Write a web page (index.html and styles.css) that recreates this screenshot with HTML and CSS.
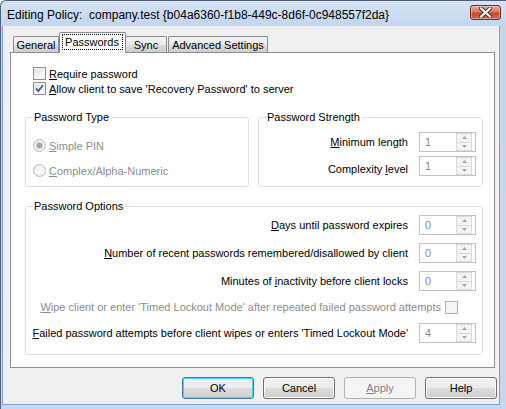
FILE: index.html
```html
<!DOCTYPE html>
<html>
<head>
<meta charset="utf-8">
<link rel="stylesheet" href="styles.css">
</head>
<body>
<div class="window">
  <div class="titlebar">
    <span class="title">Editing Policy:&nbsp; company.test {b04a6360-f1b8-449c-8d6f-0c948557f2da}</span>
    <span class="close">
      <svg width="13" height="11" viewBox="0 0 13 11"><path d="M2 1.5 L11 9.5 M11 1.5 L2 9.5" stroke="#4a2a24" stroke-width="4" stroke-linecap="square"/><path d="M2 1.5 L11 9.5 M11 1.5 L2 9.5" stroke="#fff" stroke-width="2.2" stroke-linecap="square"/></svg>
    </span>
  </div>
  <div class="client">
    <div class="tabs">
      <div class="tab t-general">General</div>
      <div class="tab t-pass active"><span class="focus">Passwords</span></div>
      <div class="tab t-sync">Sync</div>
      <div class="tab t-adv">Advanced Settings</div>
    </div>
    <div class="panel">
      <div class="check">
        <span class="box"></span><span><u>R</u>equire password</span>
      </div>
      <div class="check">
        <span class="box"><svg width="11" height="11" viewBox="0 0 11 11"><path d="M2 5.5 L4.3 8 L9 2.2" fill="none" stroke="#3b5aa0" stroke-width="1.8"/></svg></span><span><u>A</u>llow client to save 'Recovery Password' to server</span>
      </div>
      <div class="pair">
        <fieldset class="group type">
          <legend>Password Type</legend>
          <div class="radio-row"><span class="radio on"></span><span class="dis"><u>S</u>imple PIN</span></div>
          <div class="radio-row"><span class="radio"></span><span class="dis"><u>C</u>omplex/Alpha-Numeric</span></div>
        </fieldset>
        <fieldset class="group strength">
          <legend>Password Strength</legend>
          <div class="row"><span class="lbl"><u>M</u>inimum length</span><span class="spin"><span class="val">1</span><span class="arrows"><span class="ab"><svg width="5" height="3" viewBox="0 0 5 3"><path d="M0 3 L2.5 0 L5 3Z" fill="#a9a9a9"/></svg></span><span class="ab"><svg width="5" height="3" viewBox="0 0 5 3"><path d="M0 0 L2.5 3 L5 0Z" fill="#a9a9a9"/></svg></span></span></span></div>
          <div class="row low"><span class="lbl">Complexity <u>l</u>evel</span><span class="spin"><span class="val">1</span><span class="arrows"><span class="ab"><svg width="5" height="3" viewBox="0 0 5 3"><path d="M0 3 L2.5 0 L5 3Z" fill="#a9a9a9"/></svg></span><span class="ab"><svg width="5" height="3" viewBox="0 0 5 3"><path d="M0 0 L2.5 3 L5 0Z" fill="#a9a9a9"/></svg></span></span></span></div>
        </fieldset>
      </div>
      <fieldset class="group options">
        <legend>Password Options</legend>
        <div class="row"><span class="lbl"><u>D</u>ays until password expires</span><span class="spin"><span class="val">0</span><span class="arrows"><span class="ab"><svg width="5" height="3" viewBox="0 0 5 3"><path d="M0 3 L2.5 0 L5 3Z" fill="#a9a9a9"/></svg></span><span class="ab"><svg width="5" height="3" viewBox="0 0 5 3"><path d="M0 0 L2.5 3 L5 0Z" fill="#a9a9a9"/></svg></span></span></span></div>
        <div class="row"><span class="lbl"><u>N</u>umber of recent passwords remembered/disallowed by client</span><span class="spin"><span class="val">0</span><span class="arrows"><span class="ab"><svg width="5" height="3" viewBox="0 0 5 3"><path d="M0 3 L2.5 0 L5 3Z" fill="#a9a9a9"/></svg></span><span class="ab"><svg width="5" height="3" viewBox="0 0 5 3"><path d="M0 0 L2.5 3 L5 0Z" fill="#a9a9a9"/></svg></span></span></span></div>
        <div class="row"><span class="lbl">Minutes of <u>i</u>nactivity before client locks</span><span class="spin"><span class="val">0</span><span class="arrows"><span class="ab"><svg width="5" height="3" viewBox="0 0 5 3"><path d="M0 3 L2.5 0 L5 3Z" fill="#a9a9a9"/></svg></span><span class="ab"><svg width="5" height="3" viewBox="0 0 5 3"><path d="M0 0 L2.5 3 L5 0Z" fill="#a9a9a9"/></svg></span></span></span></div>
        <div class="row wipe"><span class="lbl dis"><u>W</u>ipe client or enter 'Timed Lockout Mode' after repeated failed password attempts</span><span class="box disabled"></span></div>
        <div class="row"><span class="lbl"><u>F</u>ailed password attempts before client wipes or enters 'Timed Lockout Mode'</span><span class="spin"><span class="val">4</span><span class="arrows"><span class="ab"><svg width="5" height="3" viewBox="0 0 5 3"><path d="M0 3 L2.5 0 L5 3Z" fill="#a9a9a9"/></svg></span><span class="ab"><svg width="5" height="3" viewBox="0 0 5 3"><path d="M0 0 L2.5 3 L5 0Z" fill="#a9a9a9"/></svg></span></span></span></div>
      </fieldset>
    </div>
    <div class="buttons">
      <span class="btn default">OK</span>
      <span class="btn">Cancel</span>
      <span class="btn disabled"><u>A</u>pply</span>
      <span class="btn">Help</span>
    </div>
  </div>
</div>
</body>
</html>
```
FILE: styles.css
```css
html, body {
  margin: 0;
  padding: 0;
  background: #fff;
}
body {
  font-family: "Liberation Sans", Arial, sans-serif;
  font-size: 11px;
  color: #000;
}
u { text-decoration: underline; text-underline-offset: 1px; }

.window {
  width: 506px;
  height: 409px;
  box-sizing: border-box;
  border-top: 1px solid #4f6178;
  border-left: 1px solid #4f6178;
  border-top-left-radius: 6px;
  background: linear-gradient(to bottom, #d6e4f5 0, #c1d5ed 26px, #c5d8ef 100%);
  display: flex;
  flex-direction: column;
  overflow: hidden;
}
.titlebar {
  height: 25px;
  flex: none;
  display: flex;
  align-items: center;
  padding: 0 5px 0 6px;
}
.title {
  font-size: 12px;
  color: #000;
  padding-top: 3px;
}
.close {
  margin-left: auto;
  align-self: flex-start;
  margin-top: 4px;
  width: 31px;
  height: 15px;
  box-sizing: border-box;
  border: 1px solid #6e2a1e;
  border-radius: 3px;
  background: linear-gradient(to bottom, #e8a594 0, #d97a63 45%, #c24a2f 55%, #d4694e 100%);
  box-shadow: inset 0 0 0 1px rgba(255,255,255,0.35);
  display: flex;
  align-items: center;
  justify-content: center;
}

.client {
  flex: 1;
  margin: 0 6px 4px 1px;
  background: #f0f0f0;
  border: 1px solid #7fa0c8;
  border-top: none;
  display: flex;
  flex-direction: column;
}

.tabs {
  display: flex;
  align-items: flex-end;
  height: 20px;
  padding: 6px 0 0 10px;
}
.tab {
  height: 16px;
  box-sizing: border-box;
  border: 1px solid #898c95;
  border-bottom: none;
  border-radius: 2px 2px 0 0;
  background: linear-gradient(to bottom, #f3f3f3 0, #ebebeb 50%, #dddddd 51%, #cfcfcf 100%);
  display: flex;
  align-items: center;
  justify-content: center;
  padding-top: 1px;
}
.t-general { width: 46px; }
.t-pass { width: 67px; }
.t-sync { width: 42px; margin-left: -1px; }
.t-adv { width: 100px; margin-left: 1px; }
.tab.active {
  height: 21px;
  margin-bottom: -1px;
  background: #fff;
  position: relative;
  z-index: 1;
  align-items: flex-start;
  padding-top: 2px;
}
.focus {
  outline: 1px dotted #000;
  outline-offset: 0;
  padding: 1px 3px 1px 2px;
  line-height: 12px;
}

.panel {
  margin: 0 4px 0 7px;
  border: 1px solid #898c95;
  background: #fff;
  padding: 13px 11px 12px 14px;
}

.check {
  display: flex;
  align-items: center;
  height: 15px;
  padding-left: 8px;
}
.box {
  width: 13px;
  height: 13px;
  box-sizing: border-box;
  border: 1px solid #8e8f8f;
  background: linear-gradient(135deg, #dcdcdc 0, #f4f4f4 60%, #fff 100%);
  box-shadow: inset 0 0 0 1px #f4f4f4;
  margin-right: 3px;
  display: flex;
  align-items: center;
  justify-content: center;
  flex: none;
}
.box.disabled {
  border-color: #b1b1b1;
  background: #f4f4f4;
  box-shadow: none;
  margin: 0 18px 0 4px;
}

.pair {
  display: grid;
  grid-template-columns: 224px 1fr;
  column-gap: 9px;
  margin-top: 15px;
}
.group {
  margin: 0;
  padding: 0 6px 0 6px;
  border: 1px solid #d5dfe5;
  border-radius: 3px;
  min-width: 0;
}
.group legend {
  padding: 0 2px 0 1px;
  margin-left: 1px;
  line-height: 13px;
}
.type { padding-top: 14px; padding-bottom: 8px; }
.strength { padding-top: 8px; padding-bottom: 10px; }

.radio-row {
  display: flex;
  align-items: center;
  height: 15px;
  padding-left: 1px;
}
.radio-row + .radio-row { margin-top: 10px; }
.radio {
  width: 13px;
  height: 13px;
  box-sizing: border-box;
  border-radius: 50%;
  border: 1px solid #b9b9b9;
  background: radial-gradient(circle at 60% 60%, #fafafa 0, #ececec 100%);
  margin-right: 3px;
  display: flex;
  align-items: center;
  justify-content: center;
  flex: none;
}
.radio.on::after {
  content: "";
  width: 5px;
  height: 5px;
  border-radius: 50%;
  background: #a2a2a2;
  box-shadow: 0 0 0 1px #c8c8c8;
}
.dis { color: #8d8d8d; }

.row {
  display: flex;
  align-items: center;
  justify-content: flex-end;
  height: 20px;
}
.strength .row + .row { margin-top: 4px; }
.row.low .lbl { padding-top: 6px; }
.lbl { margin-right: 11px; white-space: nowrap; }
.wipe .lbl { margin-right: 0; }

.spin {
  width: 57px;
  height: 20px;
  box-sizing: border-box;
  border: 1px solid #c2c2c2;
  background: #fff;
  display: flex;
  flex: none;
}
.val {
  flex: 1;
  color: #8a8a8a;
  padding: 2px 0 0 5px;
  line-height: 14px;
}
.arrows {
  width: 16px;
  display: flex;
  flex-direction: column;
  margin: 0 3px 0 0;
}
.ab {
  flex: 1;
  border: 1px solid #dadada;
  background: #f4f4f4;
  display: flex;
  align-items: center;
  justify-content: center;
}
.ab + .ab { border-top: none; }

.options {
  margin-top: 13px;
  padding-top: 2px;
  padding-bottom: 11px;
}
.options .row + .row { margin-top: 8px; }
.options .row.wipe { height: 16px; }

.buttons {
  display: flex;
  justify-content: flex-end;
  column-gap: 9px;
  margin-top: 9px;
  padding-right: 2px;
}
.btn {
  width: 72px;
  height: 22px;
  box-sizing: border-box;
  border: 1px solid #707070;
  border-radius: 3px;
  background: linear-gradient(to bottom, #f2f2f2 0, #ebebeb 50%, #dddddd 51%, #cfcfcf 100%);
  box-shadow: inset 0 0 0 1px #fcfcfc;
  display: flex;
  align-items: center;
  justify-content: center;
}
.btn.default {
  border-color: #3c7fb1;
  box-shadow: inset 0 0 0 1px #48d2f8;
}
.btn.disabled {
  border-color: #adb2b5;
  background: #f4f4f4;
  box-shadow: none;
  color: #838383;
}
```
